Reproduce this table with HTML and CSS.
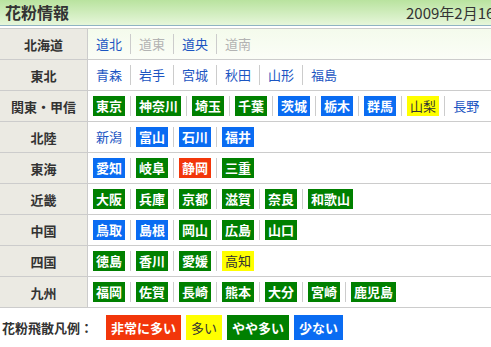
FILE: index.html
```html
<!DOCTYPE html>
<html lang="ja">
<head>
<meta charset="utf-8">
<title>花粉情報</title>
<link rel="stylesheet" href="styles.css">
</head>
<body>
<div class="page">
  <header class="bar">
    <h1 class="bar-title">花粉情報</h1>
    <p class="bar-date">2009年2月16日</p>
  </header>

  <table class="areas">
    <tr>
      <th>北海道</th>
      <td><ul class="prefs">
        <li><a class="pref">道北</a></li>
        <li><span class="pref off">道東</span></li>
        <li><a class="pref">道央</a></li>
        <li><span class="pref off">道南</span></li>
      </ul></td>
    </tr>
    <tr>
      <th>東北</th>
      <td><ul class="prefs">
        <li><a class="pref">青森</a></li>
        <li><a class="pref">岩手</a></li>
        <li><a class="pref">宮城</a></li>
        <li><a class="pref">秋田</a></li>
        <li><a class="pref">山形</a></li>
        <li><a class="pref">福島</a></li>
      </ul></td>
    </tr>
    <tr>
      <th>関東・甲信</th>
      <td><ul class="prefs">
        <li><a class="pref mid">東京</a></li>
        <li><a class="pref mid">神奈川</a></li>
        <li><a class="pref mid">埼玉</a></li>
        <li><a class="pref mid">千葉</a></li>
        <li><a class="pref low">茨城</a></li>
        <li><a class="pref low">栃木</a></li>
        <li><a class="pref low">群馬</a></li>
        <li><a class="pref high">山梨</a></li>
        <li><a class="pref">長野</a></li>
      </ul></td>
    </tr>
    <tr>
      <th>北陸</th>
      <td><ul class="prefs">
        <li><a class="pref">新潟</a></li>
        <li><a class="pref low">富山</a></li>
        <li><a class="pref low">石川</a></li>
        <li><a class="pref low">福井</a></li>
      </ul></td>
    </tr>
    <tr>
      <th>東海</th>
      <td><ul class="prefs">
        <li><a class="pref low">愛知</a></li>
        <li><a class="pref mid">岐阜</a></li>
        <li><a class="pref top">静岡</a></li>
        <li><a class="pref mid">三重</a></li>
      </ul></td>
    </tr>
    <tr>
      <th>近畿</th>
      <td><ul class="prefs">
        <li><a class="pref mid">大阪</a></li>
        <li><a class="pref mid">兵庫</a></li>
        <li><a class="pref mid">京都</a></li>
        <li><a class="pref mid">滋賀</a></li>
        <li><a class="pref mid">奈良</a></li>
        <li><a class="pref mid">和歌山</a></li>
      </ul></td>
    </tr>
    <tr>
      <th>中国</th>
      <td><ul class="prefs">
        <li><a class="pref low">鳥取</a></li>
        <li><a class="pref low">島根</a></li>
        <li><a class="pref mid">岡山</a></li>
        <li><a class="pref mid">広島</a></li>
        <li><a class="pref mid">山口</a></li>
      </ul></td>
    </tr>
    <tr>
      <th>四国</th>
      <td><ul class="prefs">
        <li><a class="pref mid">徳島</a></li>
        <li><a class="pref mid">香川</a></li>
        <li><a class="pref mid">愛媛</a></li>
        <li><a class="pref high">高知</a></li>
      </ul></td>
    </tr>
    <tr>
      <th>九州</th>
      <td><ul class="prefs">
        <li><a class="pref mid">福岡</a></li>
        <li><a class="pref mid">佐賀</a></li>
        <li><a class="pref mid">長崎</a></li>
        <li><a class="pref mid">熊本</a></li>
        <li><a class="pref mid">大分</a></li>
        <li><a class="pref mid">宮崎</a></li>
        <li><a class="pref mid">鹿児島</a></li>
      </ul></td>
    </tr>
  </table>

  <div class="legend">
    <span class="legend-label">花粉飛散凡例：</span>
    <span class="chip top">非常に多い</span>
    <span class="chip high">多い</span>
    <span class="chip mid">やや多い</span>
    <span class="chip low">少ない</span>
  </div>
</div>
</body>
</html>
```

FILE: styles.css
```css
html, body {
  margin: 0;
  padding: 0;
  background: #fff;
  overflow: hidden;
}

body {
  font-family: "Noto Sans CJK JP", "Noto Sans", sans-serif;
  font-size: 13px;
  color: #333;
}

.page {
  width: 540px;
}

/* title bar */
.bar {
  display: grid;
  grid-template-columns: 406px auto;
  align-items: center;
  height: 25px;
  background: linear-gradient(#b9e39f, #e6f6da);
  border-bottom: 1px solid #8eb3c3;
}

.bar-title {
  margin: 0;
  padding-left: 5px;
  font-size: 16px;
  font-weight: bold;
  line-height: 25px;
  color: #333;
}

.bar-date {
  margin: 0;
  font-size: 15px;
  line-height: 25px;
  white-space: nowrap;
  color: #333;
}

/* region table */
.areas {
  width: 100%;
  margin-top: 2px;
  border-collapse: separate;
  border-spacing: 0;
  border-top: 1px solid #cccccc;
}

.areas th,
.areas td {
  height: 30px;
  padding: 0;
  border-bottom: 1px solid #cccccc;
}

.areas th {
  width: 87px;
  background: #ebeae3;
  border-right: 1px solid #cccccc;
  font-weight: bold;
  text-align: center;
  color: #333;
}

.areas tr:first-child td {
  background: linear-gradient(#f4fbec, #fbfdf7);
}

.prefs {
  display: flex;
  align-items: center;
  margin: 0;
  padding: 0 0 0 5px;
  list-style: none;
}

.prefs li {
  display: flex;
  height: 20px;
}

.prefs li + li {
  margin-left: 5px;
  padding-left: 5px;
  border-left: 1px solid #cccccc;
}

.pref {
  display: block;
  padding: 0 3px;
  line-height: 20px;
  color: #1b55c2;
  white-space: nowrap;
}

.pref.off {
  color: #b3b3b3;
}

/* pollen levels */
.top,
.mid,
.low {
  color: #fff;
  font-weight: bold;
}

.top { background: #f2360a; }
.high { background: #ffff00; color: #333; }
.mid { background: #008000; }
.low { background: #0a6cf2; }

/* legend */
.legend {
  display: flex;
  align-items: center;
  gap: 5px;
  margin-top: 7px;
  padding-left: 2px;
}

.legend-label {
  font-weight: bold;
  margin-right: 8px;
}

.chip {
  padding: 0 5px;
  line-height: 25px;
  white-space: nowrap;
}
```
